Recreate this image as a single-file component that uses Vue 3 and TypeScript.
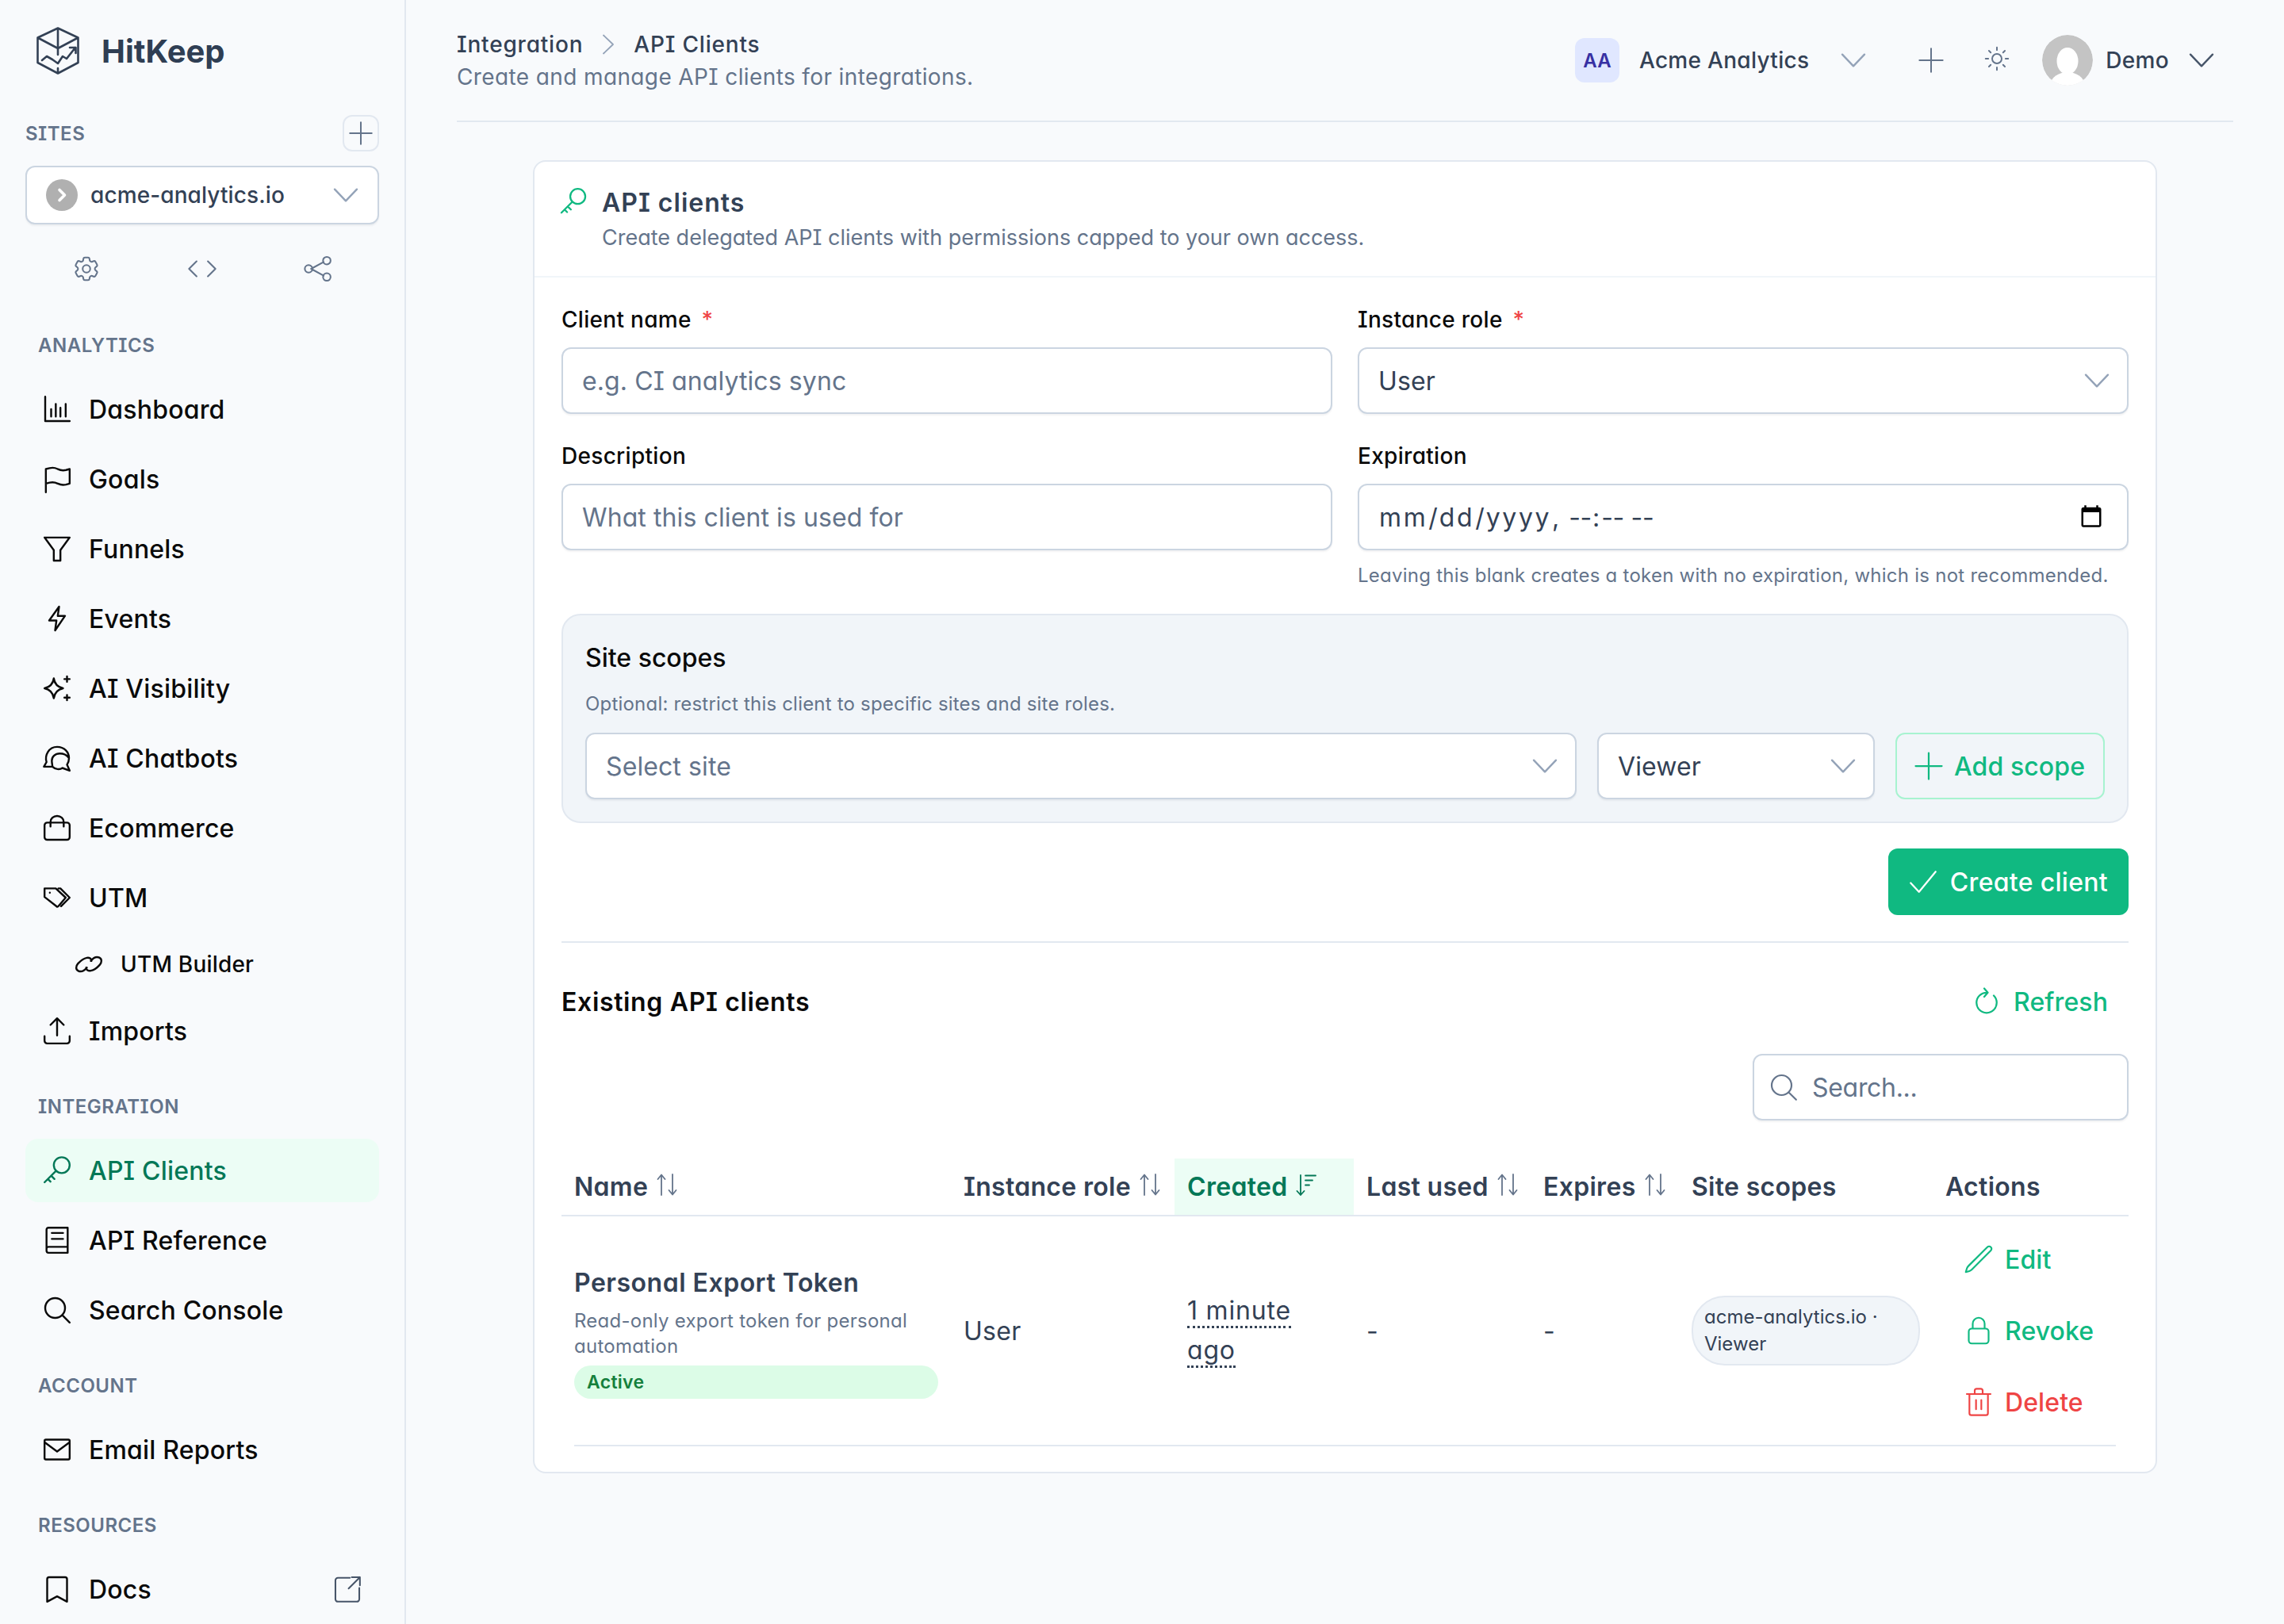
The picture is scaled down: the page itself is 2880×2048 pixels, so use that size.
<template>
  <div class="app">
    <!-- sidebar -->
    <aside class="sidebar">
      <div class="brand">
        <svg class="logo" viewBox="0 0 54 60" fill="none" stroke="#1a5a85" stroke-width="2.6" stroke-linejoin="round" stroke-linecap="round">
          <path d="M27 1.5 52.5 13.5V45L27 58.5 1.5 45V13.5ZM1.5 13.5 27 27 52.5 13.5M27 1.5V27M27 27V35M27 52V58.5" />
          <path d="M7 42 13 37 20 41 27 46 33 37 38 40 49 26M42 26H49.5V33" />
        </svg>
        <span class="brand-name">HitKeep</span>
      </div>

      <div class="sites-head">
        <span class="sites-label">SITES</span>
        <button class="sites-add">
          <svg viewBox="0 0 24 24" class="i30"><path :d="icons.plus" /></svg>
        </button>
      </div>

      <div class="site-select">
        <span class="favicon">
          <svg viewBox="0 0 24 24"><path d="M9 5.5 15.5 12 9 18.5" /></svg>
        </span>
        <span class="site-name">acme-analytics.io</span>
        <svg viewBox="0 0 24 24" class="site-chev"><path :d="icons.chevron" /></svg>
      </div>

      <div class="site-tools">
        <svg v-for="t in ['cog', 'code', 'share']" :key="t" viewBox="0 0 24 24" class="tool"><path :d="icons[t]" /></svg>
      </div>

      <template v-for="group in nav" :key="group.title">
        <div class="nav-label">{{ group.title }}</div>
        <div class="nav-list">
          <a
            v-for="item in group.items"
            :key="item.label"
            class="nav-item"
            :class="{ active: item.active, sub: item.sub }"
          >
            <svg viewBox="0 0 24 24" class="nav-icon"><path :d="icons[item.icon]" /></svg>
            <span>{{ item.label }}</span>
            <svg v-if="item.external" viewBox="0 0 24 24" class="nav-ext"><path :d="icons.external" /></svg>
          </a>
        </div>
      </template>
    </aside>

    <div class="main">
      <!-- header -->
      <header class="topbar">
        <div>
          <div class="crumbs">
            <span>Integration</span>
            <svg viewBox="0 0 16 26" class="crumb-sep"><path d="M2 1.5 14 13 2 24.5" /></svg>
            <span>API Clients</span>
          </div>
          <div class="page-sub">Create and manage API clients for integrations.</div>
        </div>
        <div class="top-right">
          <span class="org-badge">AA</span>
          <span class="org-name">Acme Analytics</span>
          <svg viewBox="0 0 24 24" class="org-chev"><path :d="icons.chevron" /></svg>
          <svg viewBox="0 0 24 24" class="top-plus"><path :d="icons.plus" /></svg>
          <svg viewBox="0 0 24 24" class="top-sun"><path :d="icons.sun" /></svg>
          <svg viewBox="0 0 64 64" class="avatar">
            <defs><clipPath id="av"><circle cx="32" cy="32" r="32" /></clipPath></defs>
            <g clip-path="url(#av)">
              <circle cx="32" cy="32" r="32" fill="#c4c4c4" />
              <ellipse cx="32" cy="33" rx="13.5" ry="17" fill="#fff" />
              <ellipse cx="32" cy="62" rx="21" ry="15" fill="#fff" />
            </g>
          </svg>
          <span class="user-name">Demo</span>
          <svg viewBox="0 0 24 24" class="user-chev"><path :d="icons.chevron" /></svg>
        </div>
      </header>

      <section class="card">
        <div class="card-head">
          <svg viewBox="0 0 24 24" class="card-key"><path :d="icons.key" /></svg>
          <div>
            <h2 class="card-title">API clients</h2>
            <p class="card-sub">Create delegated API clients with permissions capped to your own access.</p>
          </div>
        </div>

        <div class="card-body">
          <div class="form-grid">
            <div>
              <label class="label">Client name <span class="req">*</span></label>
              <input class="input" placeholder="e.g. CI analytics sync" />
            </div>
            <div>
              <label class="label">Instance role <span class="req">*</span></label>
              <div class="select-wrap">
                <select class="input select"><option>User</option></select>
                <svg viewBox="0 0 24 24" class="select-chev"><path :d="icons.chevron" /></svg>
              </div>
            </div>
            <div>
              <label class="label">Description</label>
              <input class="input" placeholder="What this client is used for" />
            </div>
            <div>
              <label class="label">Expiration</label>
              <input class="input date" type="datetime-local" />
              <p class="hint">Leaving this blank creates a token with no expiration, which is not recommended.</p>
            </div>
          </div>

          <div class="scopes">
            <h3 class="scopes-title">Site scopes</h3>
            <p class="scopes-sub">Optional: restrict this client to specific sites and site roles.</p>
            <div class="scope-row">
              <div class="select-wrap grow">
                <select class="input select muted"><option>Select site</option></select>
                <svg viewBox="0 0 24 24" class="select-chev"><path :d="icons.chevron" /></svg>
              </div>
              <div class="select-wrap role">
                <select class="input select"><option>Viewer</option></select>
                <svg viewBox="0 0 24 24" class="select-chev"><path :d="icons.chevron" /></svg>
              </div>
              <button class="btn outline">
                <svg viewBox="0 0 24 24" class="i36"><path :d="icons.plus" /></svg>
                Add scope
              </button>
            </div>
          </div>

          <div class="create-row">
            <button class="btn primary">
              <svg viewBox="0 0 24 24" class="i36"><path :d="icons.check" /></svg>
              Create client
            </button>
          </div>

          <div class="divider"></div>

          <div class="list-head">
            <h3 class="list-title">Existing API clients</h3>
            <button class="btn ghost">
              <svg viewBox="0 0 24 24" class="i36"><path :d="icons.refresh" /></svg>
              Refresh
            </button>
          </div>

          <div class="search-row">
            <div class="search">
              <svg viewBox="0 0 24 24" class="i40"><path :d="icons.search" /></svg>
              <input placeholder="Search..." />
            </div>
          </div>

          <table class="table">
            <colgroup>
              <col v-for="c in columns" :key="c.label" :class="c.cls" />
            </colgroup>
            <thead>
              <tr>
                <th v-for="c in columns" :key="c.label" :class="{ sorted: c.sort === 'desc' }">
                  <span class="th-in">
                    {{ c.label }}
                    <svg v-if="c.sort" viewBox="0 0 26 28" class="sort">
                      <template v-if="c.sort === 'both'">
                        <path d="M6 27V2M1.5 7 6 1.5 10.500 7" />
                        <path d="M20 1V26M15.500 21 20 26.500 24.500 21" />
                      </template>
                      <template v-else>
                        <path d="M6 27V2M1.500 22 6 27 10.500 22" />
                        <path d="M12 2.500H25M12 8.500H21M12 14.500H17" />
                      </template>
                    </svg>
                  </span>
                </th>
              </tr>
            </thead>
            <tbody>
              <tr>
                <td>
                  <div class="client-name">Personal Export Token</div>
                  <div class="client-desc">Read-only export token for personal automation</div>
                  <div class="status">Active</div>
                </td>
                <td>User</td>
                <td><span class="time">1 minute ago</span></td>
                <td>-</td>
                <td>-</td>
                <td><span class="scope-pill">acme-analytics.io · Viewer</span></td>
                <td>
                  <div class="actions">
                    <button v-for="a in actions" :key="a.label" class="btn ghost action" :class="{ danger: a.danger }">
                      <svg viewBox="0 0 24 24" class="i40"><path :d="icons[a.icon]" /></svg>
                      {{ a.label }}
                    </button>
                  </div>
                </td>
              </tr>
              <tr class="rule"><td colspan="7"><div></div></td></tr>
            </tbody>
          </table>
        </div>
      </section>
    </div>
  </div>
</template>

<script setup lang="ts">
type NavItem = { label: string; icon: string; active?: boolean; sub?: boolean; external?: boolean }

const icons: Record<string, string> = {
  plus: 'M12 1v22M1 12h22',
  chevron: 'M1.500 6.500 12 17.500 22.500 6.500',
  check: 'M1.500 13 8.500 20.500 22.500 3.500',
  cog: 'M9.594 3.940c.09-.542.56-.94 1.110-.94h2.593c.55 0 1.020.398 1.110.94l.213 1.281c.063.374.313.686.645.870.074.04.147.083.22.127.325.196.72.257 1.075.124l1.217-.456a1.125 1.125 0 0 1 1.370.49l1.296 2.247a1.125 1.125 0 0 1-.26 1.431l-1.003.827c-.293.241-.438.613-.43.992a7.723 7.723 0 0 1 0 .255c-.008.378.137.75.43.991l1.004.827c.424.35.534.955.26 1.430l-1.298 2.247a1.125 1.125 0 0 1-1.369.491l-1.217-.456c-.355-.133-.75-.072-1.076.124a6.470 6.470 0 0 1-.22.128c-.331.183-.581.495-.644.869l-.213 1.281c-.09.543-.56.94-1.110.94h-2.594c-.55 0-1.019-.398-1.110-.94l-.213-1.281c-.062-.374-.312-.686-.644-.870a6.520 6.520 0 0 1-.22-.127c-.325-.196-.72-.257-1.076-.124l-1.217.456a1.125 1.125 0 0 1-1.369-.49l-1.297-2.247a1.125 1.125 0 0 1 .26-1.431l1.004-.827c.292-.24.437-.613.43-.991a6.932 6.932 0 0 1 0-.255c.007-.38-.138-.751-.43-.992l-1.004-.827a1.125 1.125 0 0 1-.26-1.430l1.297-2.247a1.125 1.125 0 0 1 1.370-.491l1.216.456c.356.133.751.072 1.076-.124.072-.044.146-.086.22-.128.332-.183.582-.495.644-.869l.214-1.280ZM15 12a3 3 0 1 1-6 0 3 3 0 0 1 6 0Z',
  code: 'M16.500 6 22.500 12l-6 6M7.500 18 1.500 12l6-6',
  share: 'M6.500 12 16.500 6.500M6.500 12l10 5.500M7.500 12a3 3 0 1 1-6 0 3 3 0 0 1 6 0ZM22 5.500a3 3 0 1 1-6 0 3 3 0 0 1 6 0ZM22 18.500a3 3 0 1 1-6 0 3 3 0 0 1 6 0Z',
  sun: 'M12 2.500v2.250M18.700 5.300l-1.500 1.500M21.500 12h-2.250M18.700 18.700l-1.500-1.500M12 19.250v2.250M6.800 17.200l-1.500 1.500M4.750 12H2.500M6.800 6.800 5.300 5.300M16 12a4 4 0 1 1-8 0 4 4 0 0 1 8 0Z',
  chart: 'M3 2.500V21h18.500M7.500 12v5.500M11 8v9.500M14.500 11v6.500M18.500 8v9.500',
  flag: 'M3.500 22V4.500M3.500 15.500l2.770-.693a9 9 0 0 1 6.208.682l.108.054a9 9 0 0 0 6.086.71L21.500 15.500V4.500l-2.820.753a9 9 0 0 1-6.085-.711l-.108-.054a9 9 0 0 0-6.208-.682L3.500 4.500',
  funnel: 'M2.500 3.500h19L14.500 13v8h-5v-8Z',
  bolt: 'M13.500 3 6 13.500h5.500l-1 7.500L18 10h-5.500Z',
  spark: 'M9.500 4.500c.5 3.500 2.500 6.500 7 7.500-4.500 1-6.500 4-7 7.500-.5-3.500-2.500-6.500-7-7.500 4.500-1 6.500-4 7-7.500ZM19.500 3v4M17.500 5h4M19.500 17v4M17.500 19h4',
  chat: 'M2 18.500 4 15C2.500 10 5.500 3.500 12 3.500 17.500 3.500 21 7.500 21 12 21 14 20.500 15.500 19.500 17L21.500 21.500 16 19.500C14 21 10.500 20.500 8.500 18.500ZM8 14C8 11 10.500 8.500 14 8.500 17 8.500 19.500 10 20.500 11.500M8 14C8 16 8.500 17.500 8.500 18.500',
  bag: 'M2.500 10a2 2 0 0 1 2-2h15a2 2 0 0 1 2 2v9a2 2 0 0 1-2 2h-15a2 2 0 0 1-2-2ZM7 11V7.500a5 4.500 0 0 1 10 0V11',
  tags: 'M2.500 5h8.500l7.500 7-5.500 6.500a1 1 0 0 1-1.400.1L2.500 11.500ZM13 5h1.500l7 7-6.500 6.500M6.500 8.200h.01',
  link: 'M10.500 14.500c-2 2.500-4.500 3.500-6.500 2.500-2-1-2-3.500-.2-5.500 1.800-2 4.500-4 6.700-4.400 2-.4 3.500.6 3.500 2.400M13.500 9.500c2-2.500 4.500-3.500 6.500-2.500 2 1 2 3.500.2 5.500-1.800 2-4.500 4-6.700 4.400-2 .4-3.500-.6-3.500-2.400',
  upload: 'M2.500 16v3.500a2 2 0 0 0 2 2h15a2 2 0 0 0 2-2V16M7 7.500 12 2.500l5 5M12 2.500v13',
  key: 'M21.500 8a6 6 0 1 1-12 0 6 6 0 0 1 12 0ZM11 12.500 2.500 21M7.500 16l2.500 2.500M5 18.500l2 2',
  book: 'M4 18.500V4a1.500 1.500 0 0 1 1.500-1.500H20v19H5.500A1.500 1.500 0 0 1 4 20v-1.500a1.500 1.500 0 0 1 1.500-1.500H20M8 6.500h8.500M8 11h8.500',
  search: 'M21.500 21.500l-5.500-5.500M18 10.500a7.500 7.500 0 1 1-15 0 7.500 7.500 0 0 1 15 0Z',
  mail: 'M2.500 5.500a1 1 0 0 1 1-1h17a1 1 0 0 1 1 1v13a1 1 0 0 1-1 1h-17a1 1 0 0 1-1-1ZM2.500 6.500 12 13.500l9.500-7',
  bookmark: 'M18 3a1.500 1.500 0 0 1 1.500 1.500V21.500L12 17.500 4.500 21.500V4.500A1.500 1.500 0 0 1 6 3Z',
  external: 'M14 3H4.500a2 2 0 0 0-2 2v15a2 2 0 0 0 2 2H19.500a2 2 0 0 0 2-2V11M15.500 2.500H22V9M22 2.500l-9 9',
  refresh: 'M12 4.500a8.500 8.500 0 1 0 8.500 8.500c0-2.500-1-4.500-2.500-6M10 1l3 3.500L10 8',
  pencil: 'M16.862 4.487l1.687-1.688a1.875 1.875 0 1 1 2.652 2.652L6.832 19.820a4.500 4.500 0 0 1-1.897 1.130l-2.685.8.8-2.685a4.500 4.500 0 0 1 1.130-1.897L16.863 4.487Z',
  lock: 'M16.500 10.500V6.750a4.500 4.500 0 1 0-9 0v3.750M6.750 21.750h10.500a2.250 2.250 0 0 0 2.250-2.250v-6.750a2.250 2.250 0 0 0-2.250-2.250H6.750a2.250 2.250 0 0 0-2.250 2.250v6.750a2.250 2.250 0 0 0 2.250 2.250Z',
  trash: 'M3 6h18M9 6V3.500A1.500 1.500 0 0 1 10.500 2h3A1.500 1.500 0 0 1 15 3.500V6M5 6v14.500A1.500 1.500 0 0 0 6.500 22h11a1.500 1.500 0 0 0 1.500-1.500V6M10 10.500v7M14 10.500v7',
}

const nav: { title: string; items: NavItem[] }[] = [
  {
    title: 'ANALYTICS',
    items: [
      { label: 'Dashboard', icon: 'chart' },
      { label: 'Goals', icon: 'flag' },
      { label: 'Funnels', icon: 'funnel' },
      { label: 'Events', icon: 'bolt' },
      { label: 'AI Visibility', icon: 'spark' },
      { label: 'AI Chatbots', icon: 'chat' },
      { label: 'Ecommerce', icon: 'bag' },
      { label: 'UTM', icon: 'tags' },
      { label: 'UTM Builder', icon: 'link', sub: true },
      { label: 'Imports', icon: 'upload' },
    ],
  },
  {
    title: 'INTEGRATION',
    items: [
      { label: 'API Clients', icon: 'key', active: true },
      { label: 'API Reference', icon: 'book' },
      { label: 'Search Console', icon: 'search' },
    ],
  },
  { title: 'ACCOUNT', items: [{ label: 'Email Reports', icon: 'mail' }] },
  { title: 'RESOURCES', items: [{ label: 'Docs', icon: 'bookmark', external: true }] },
]

const columns = [
  { label: 'Name', cls: 'c-name', sort: 'both' },
  { label: 'Instance role', cls: 'c-role', sort: 'both' },
  { label: 'Created', cls: 'c-created', sort: 'desc' },
  { label: 'Last used', cls: 'c-used', sort: 'both' },
  { label: 'Expires', cls: 'c-exp', sort: 'both' },
  { label: 'Site scopes', cls: 'c-scope', sort: '' },
  { label: 'Actions', cls: 'c-act', sort: '' },
]

const actions = [
  { label: 'Edit', icon: 'pencil', danger: false },
  { label: 'Revoke', icon: 'lock', danger: false },
  { label: 'Delete', icon: 'trash', danger: true },
]
</script>

<style>
html, body { margin: 0; background: #f8fafc; }
</style>

<style scoped>
* { box-sizing: border-box; }
.app {
  display: flex;
  width: 2880px;
  height: 2048px;
  overflow: hidden;
  background: #f8fafc;
  font-family: Inter, "Noto Sans", sans-serif;
  font-feature-settings: "cv11" 1, "cv08" 1;
  color: #334155;
  font-size: 32px;
}
button, input, select { font: inherit; font-feature-settings: inherit; }
svg { fill: none; stroke: currentColor; stroke-linecap: round; stroke-linejoin: round; flex: none; }
.i30 { width: 30px; height: 30px; stroke-width: 1.6; }
.i36 { width: 36px; height: 36px; stroke-width: 1.5; }
.i40 { width: 40px; height: 40px; stroke-width: 1.3; }

/* sidebar */
.sidebar { width: 512px; flex: none; height: 2048px; border-right: 2px solid #e2e8f0; padding: 0 32px; overflow: hidden; }
.brand { display: flex; align-items: center; height: 60px; margin: 34px 0 0 14px; gap: 28px; }
.logo { width: 54px; height: 60px; }
.brand-name { font-size: 40px; font-weight: 700; color: #2f3e53; }
.sites-head { display: flex; justify-content: space-between; align-items: center; margin-top: 51px; height: 46px; }
.sites-label { font-size: 24px; font-weight: 600; color: #64748b; letter-spacing: .5px; }
.sites-add { width: 46px; height: 46px; padding: 0; border: 2px solid #e2e8f0; border-radius: 12px; background: #f8fafc; color: #64748b; display: flex; align-items: center; justify-content: center; }
.site-select { display: flex; align-items: center; height: 74px; margin-top: 18px; padding: 0 24px; background: #fff; border: 2px solid #cbd5e1; border-radius: 12px; box-shadow: 0 2px 2px rgba(15, 23, 42, .05); }
.favicon { width: 40px; height: 40px; border-radius: 50%; background: #b0b0b0; display: flex; align-items: center; justify-content: center; color: #fff; }
.favicon svg { width: 24px; height: 24px; stroke-width: 3.6; }
.site-name { margin-left: 16px; font-size: 28px; font-weight: 500; letter-spacing: .1px; flex: 1; }
.site-chev { width: 32px; height: 32px; color: #94a3b8; stroke-width: 1.8; }
.site-tools { display: grid; grid-template-columns: repeat(3, 1fr); justify-items: center; margin: 37px 4px 0; height: 38px; color: #64748b; }
.tool { width: 38px; height: 38px; stroke-width: 1.3; }
.nav-label { font-size: 24px; line-height: 32px; font-weight: 600; color: #64748b; letter-spacing: .5px; margin: 40px 0 24px 16px; }
.site-tools + .nav-label { margin-top: 62px; }
.nav-list { display: flex; flex-direction: column; gap: 8px; }
.nav-item { display: flex; align-items: center; height: 80px; padding: 0 24px; border-radius: 16px; color: #0a0a0a; font-weight: 500; font-size: 32px; letter-spacing: .2px; }
.nav-icon { width: 40px; height: 40px; margin: 0 20px 0 -4px; stroke-width: 1.45; }
.nav-item.sub { height: 72px; padding-left: 64px; font-size: 28px; }
.nav-item.active { background: #ecfdf5; color: #047857; }
.nav-ext { width: 38px; height: 38px; margin-left: auto; color: #475569; stroke-width: 1.3; margin-right: -3px; }

/* header */
.main { flex: 1; min-width: 0; padding: 0 64px; }
.topbar { display: flex; justify-content: space-between; height: 154px; border-bottom: 2px solid #e2e8f0; padding-top: 36px; }
.crumbs { display: flex; align-items: center; font-size: 28px; font-weight: 500; height: 40px; letter-spacing: .8px; }
.crumb-sep { width: 16px; height: 26px; margin: 0 24px; color: #94a3b8; stroke-width: 1.800; }
.page-sub { font-size: 28px; line-height: 40px; color: #64748b; margin-top: 1px; letter-spacing: .38px; }
.top-right { display: flex; align-items: center; height: 64px; margin-top: 8px; padding-right: 24px; font-size: 28px; font-weight: 500; }
.org-badge { width: 56px; height: 56px; border-radius: 12px; background: #e0e7ff; color: #3730a3; font-size: 24px; font-weight: 600; display: flex; align-items: center; justify-content: center; }
.org-name { margin-left: 25px; letter-spacing: .3px; }
.org-chev { width: 32px; height: 32px; margin-left: 40px; color: #94a3b8; stroke-width: 1.8; }
.top-plus { width: 32px; height: 32px; margin-left: 66px; color: #64748b; stroke-width: 1.5; }
.top-sun { width: 36px; height: 36px; margin-left: 49px; color: #64748b; stroke-width: 1.3; margin-top: -4px; }
.avatar { width: 64px; height: 64px; margin-left: 39px; stroke: none; }
.user-name { margin-left: 16px; letter-spacing: .3px; }
.user-chev { width: 32px; height: 32px; margin-left: 25px; color: #475569; stroke-width: 1.8; }

/* card */
.card { width: 2048px; margin: 48px auto 0; background: #fff; border: 2px solid #e2e8f0; border-radius: 16px; }
.card-head { display: flex; gap: 17px; padding: 28px 34px 28px 30px; border-bottom: 2px solid #f1f5f9; }
.card-key { width: 38px; height: 38px; margin-top: 3px; color: #10b981; stroke-width: 1.45; }
.card-title { margin: 0; font-size: 32px; line-height: 48px; font-weight: 600; color: #334155; letter-spacing: 1px; }
.card-sub { margin: 0; font-size: 27px; line-height: 40px; font-weight: 400; color: #64748b; }
.card-body { padding: 33px 34px 32px; }
.form-grid { display: grid; grid-template-columns: 1fr 1fr; column-gap: 32px; row-gap: 33px; }
.label { display: block; font-size: 28px; line-height: 40px; font-weight: 500; color: #0a0a0a; margin-bottom: 15px; letter-spacing: .3px; }
.req { color: #ef4444; margin-left: 5px; }
.input { display: block; width: 100%; height: 84px; padding: 0 24px; background: #fff; border: 2px solid #cbd5e1; border-radius: 12px; box-shadow: 0 2px 2px rgba(15, 23, 42, .05); font-size: 32px; color: #334155; outline: none; letter-spacing: .1px; }
.input::placeholder { color: #64748b; opacity: 1; }
.date { padding-right: 27px; letter-spacing: 1px; }
.date::-webkit-datetime-edit-month-field,
.date::-webkit-datetime-edit-day-field,
.date::-webkit-datetime-edit-year-field { letter-spacing: 2.6px; }
.date::-webkit-datetime-edit-hour-field,
.date::-webkit-datetime-edit-minute-field,
.date::-webkit-datetime-edit-ampm-field { letter-spacing: -.4px; }
.select { appearance: none; }
.select.muted { color: #64748b; }
.select-wrap { position: relative; }
.select-chev { position: absolute; right: 24px; top: 26px; width: 32px; height: 32px; color: #94a3b8; stroke-width: 1.8; pointer-events: none; }
.hint { margin: 16px 0 0; font-size: 24px; line-height: 32px; color: #64748b; letter-spacing: .25px; white-space: nowrap; }
.scopes { margin-top: 32px; height: 264px; padding: 30px 28px 28px; background: #f1f5f9; border: 2px solid #e2e8f0; border-radius: 24px; }
.scopes-title { margin: 0; font-size: 32px; line-height: 48px; font-weight: 500; color: #0a0a0a; }
.scopes-sub { margin: 16px 0 0; font-size: 24px; line-height: 36px; color: #64748b; letter-spacing: .2px; }
.scope-row { display: flex; gap: 26px; margin-top: 18px; }
.grow { flex: 1; }
.role { width: 350px; }
.btn { display: inline-flex; align-items: center; gap: 16px; height: 84px; padding: 0 24px; border: 2px solid transparent; border-radius: 12px; background: transparent; font-size: 32px; font-weight: 500; color: #10b981; letter-spacing: .1px; white-space: nowrap; }
.btn.outline { width: 264px; padding: 0 22px; gap: 14px; border-color: #a7f3d0; }
.btn.primary { background: #10b981; color: #fff; letter-spacing: .3px; }
.create-row { display: flex; justify-content: flex-end; margin-top: 32px; }
.divider { height: 2px; background: #e2e8f0; margin-top: 33px; }
.list-head { display: flex; justify-content: space-between; align-items: center; margin-top: 32px; }
.list-title { margin: 0; font-size: 32px; font-weight: 600; color: #0a0a0a; letter-spacing: .65px; }
.search-row { display: flex; justify-content: flex-end; margin-top: 24px; }
.search { display: flex; align-items: center; gap: 16px; width: 474px; height: 84px; padding: 0 17px; background: #fff; border: 2px solid #cbd5e1; border-radius: 12px; box-shadow: 0 2px 2px rgba(15, 23, 42, .05); color: #64748b; }
.search input { flex: 1; min-width: 0; border: 0; outline: 0; padding: 0; background: transparent; color: #334155; letter-spacing: -.3px; }
.search input::placeholder { color: #64748b; opacity: 1; }

/* table */
.table { width: 100%; table-layout: fixed; border-collapse: collapse; margin-top: 48px; }
.c-name { width: 491px; } .c-role { width: 282px; } .c-created { width: 226px; } .c-used { width: 223px; } .c-exp { width: 187px; } .c-scope { width: 320px; } .c-act { width: 247px; }
th { height: 72px; padding: 0 16px; text-align: left; font-size: 32px; font-weight: 600; color: #334155; border-bottom: 2px solid #e2e8f0; white-space: nowrap; letter-spacing: .3px; }
.th-in { display: inline-flex; align-items: center; gap: 11px; }
th.sorted { background: #ecfdf5; color: #047857; }
.sort { width: 26px; height: 28px; color: #64748b; stroke-width: 1.8; margin-top: -6px; }
th.sorted .sort { color: #047857; }
td { padding: 12px 16px; font-size: 32px; color: #334155; vertical-align: middle; letter-spacing: .3px; }
.client-name { font-weight: 600; line-height: 46px; letter-spacing: .5px; margin-top: 2px; }
.client-desc { font-size: 24px; line-height: 32px; color: #64748b; margin-top: 9px; letter-spacing: .25px; }
.status { height: 42px; margin-top: 8px; padding: 0 16px; line-height: 42px; border-radius: 21px; background: #dcfce7; color: #15803d; font-size: 23px; font-weight: 600; }
.time { line-height: 50px; border-bottom: 3px dotted #334155; letter-spacing: .8px; }
.scope-pill { display: block; padding: 8px 14px; line-height: 34px; font-size: 24px; background: #f1f5f9; border: 2px solid #e2e8f0; border-radius: 42px; letter-spacing: 0; }
.actions { display: flex; flex-direction: column; align-items: flex-start; gap: 6px; }
.btn.action { gap: 13px; padding: 0 20px; }
.btn.danger { color: #ef4444; }
.rule td { padding: 0 16px; }
.rule div { height: 2px; background: #e2e8f0; }
</style>
